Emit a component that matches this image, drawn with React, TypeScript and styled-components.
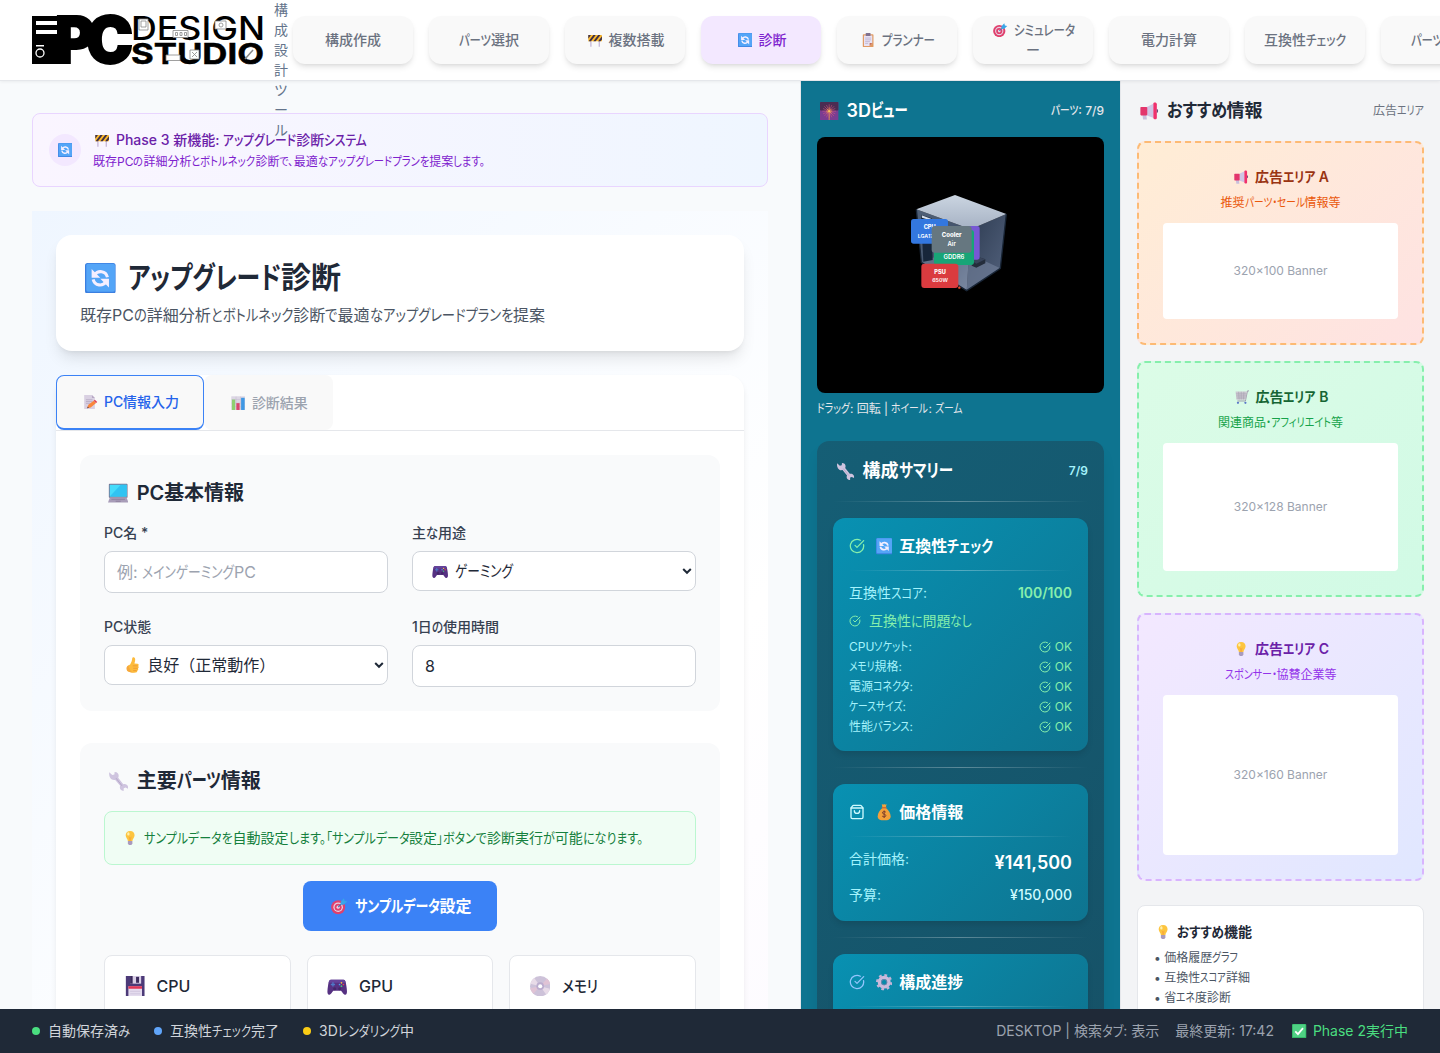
import React, { useLayoutEffect, useRef } from "react";
import styled, { createGlobalStyle, css } from "styled-components";
import { CircleCheckBig, ShoppingBag } from "lucide-react";

const Global = createGlobalStyle`
  *, *::before, *::after { box-sizing: border-box; }
  html, body { margin: 0; overflow: hidden; }
  body {
    font-family: Inter, "Noto Sans CJK JP", sans-serif;
    font-size: 16px;
    line-height: 24px;
    color: #1f2937;
    background: #f8fafc;
  }
  h1, h2, h3, h4, p, ul { margin: 0; padding: 0; font-weight: inherit; }
  button, input { font-family: inherit; }
`;

/* ---------- text with compact kana ---------- */

const Run = styled.span`
  display: inline-block;
  white-space: pre;
`;
const Kana = styled.span`
  display: inline-block;
  white-space: pre;
  transform-origin: 0 50%;
  font-feature-settings: "palt";
`;

const KANA = /([\u3040-\u30ff、。「」・]+)/;

/** Narrows the kana, and only the kana, so that the line takes the width w. */
function Ja({ text, w }: { text: string; w?: number }) {
  const ref = useRef<HTMLSpanElement>(null);
  useLayoutEffect(() => {
    const el = ref.current;
    if (!el || !w) return;
    const runs = Array.from(el.querySelectorAll<HTMLElement>("[data-kana]"));
    runs.forEach((r) => {
      r.style.width = "auto";
      r.style.transform = "none";
    });
    el.style.letterSpacing = "0px";
    const total = el.getBoundingClientRect().width;
    if (!runs.length) {
      el.style.letterSpacing = `${(w - total) / text.length}px`;
      return;
    }
    const widths = runs.map((r) => r.getBoundingClientRect().width);
    const kana = widths.reduce((a, b) => a + b, 0);
    const scale = (w - (total - kana)) / kana;
    runs.forEach((r, i) => {
      r.style.width = `${widths[i] * scale}px`;
      r.style.transform = `scaleX(${scale})`;
    });
  }, [text, w]);
  return (
    <Run ref={ref}>
      {text.split(KANA).map((part, i) =>
        i % 2 ? (
          <Kana key={i} data-kana>
            {part}
          </Kana>
        ) : (
          part
        )
      )}
    </Run>
  );
}

/* ---------- pictograms ---------- */

const Glyph = styled.span<{ $gap?: string }>`
  display: inline-flex;
  justify-content: center;
  flex: none;
  width: 1.37em;
  margin-right: ${(p) => p.$gap ?? "0.27em"};
  vertical-align: -0.17em;
  svg {
    width: 1.02em;
    height: 1.02em;
    display: block;
  }
`;

const pictures: Record<string, React.ReactNode> = {
  refresh: (
    <>
      <rect width="24" height="24" rx="2" fill="#3b7fe0" />
      <rect x="1" y="0.500" width="22.500" height="22" rx="1.500" fill="#54a5f7" />
      <g transform="translate(2.400 2.400) scale(0.8)">
        <g fill="none" stroke="#f5efff" strokeWidth="3">
          <path d="M6.500 8.500c3-4.500 11-4.200 12.500 2.500" />
          <path d="M17.500 15.500c-3 4.500-11 4.200-12.500-2.500" />
        </g>
        <path d="M3.500 3v8.500H12zM20.500 21v-8.500H12z" fill="#f5efff" />
      </g>
    </>
  ),
  barrier: (
    <>
      <path d="M4 12h1.800v11H4zM18 12h1.800v11H18z" fill="#b9a9cf" />
      <rect x="0.500" y="3.500" width="23" height="10.500" rx="1" fill="#fdb92c" />
      <path d="M1 14l8-10.500h4L5 14zM9 14l8-10.500h4L13 14zM17 14l6.500-8.500V11L21 14zM.5 3.500H5L.5 9.500z" fill="#3d3048" />
    </>
  ),
  clipboard: (
    <>
      <rect x="3" y="2" width="18" height="22" rx="1.500" fill="#e09a63" />
      <path d="M5 4h14v13l-4.500 5H5z" fill="#e8e2f4" />
      <path d="M14.500 22v-5H19z" fill="#c4705c" />
      <rect x="8" y="0" width="8" height="5" rx="1" fill="#80718f" />
      <path d="M7 8.500h10M7 11.500h10M7 14.500h8M7 17.500h5" stroke="#b3a6c4" strokeWidth="1.100" />
    </>
  ),
  target: (
    <>
      <circle cx="10.500" cy="13.500" r="10.300" fill="#e0406d" />
      <circle cx="10.500" cy="13.500" r="7" fill="#e6d3e4" />
      <circle cx="10.500" cy="13.500" r="5.200" fill="#e0406d" />
      <circle cx="10.500" cy="13.500" r="2.300" fill="#f0d6e4" />
      <path d="M10.500 13.500L19 5" stroke="#3a78b8" strokeWidth="1.600" />
      <path d="M14 6l5-5.500 1 3.500 4 1-5.500 5-4-.5z" fill="#38a6e8" />
    </>
  ),
  fireworks: (
    <>
      <rect width="24" height="24" rx="1" fill="#7a3d92" />
      <rect width="24" height="11" rx="1" fill="#4b2c52" />
      <path
        d="M12 3v18M3 12h18M5.600 5.600l12.800 12.800M18.400 5.600L5.600 18.400M8.500 4l7 16M15.500 4l-7 16M4 8.500l16 7M20 8.500l-16 7"
        stroke="#d8577f"
        strokeWidth="0.700"
      />
      <path d="M12 7v17M8 12h8M9 9l6 6M15 9l-6 6" stroke="#f0a648" strokeWidth="0.900" />
      <circle cx="12" cy="12" r="1.300" fill="#f8c65c" />
    </>
  ),
  horn: (
    <>
      <path d="M3 15h5l1 8H4z" fill="#c9bfdc" />
      <path d="M9 6.500L18 2v19l-9-3.500z" fill="#cfc4e4" />
      <rect x="0.500" y="6.500" width="9" height="11" rx="1" fill="#e3356c" />
      <path d="M17.500 2C17.500.5 22 0 22 3v18c0 2.500-4.500 2-4.500 0z" fill="#f0306c" />
      <path d="M22 9c2.200 0 2.200 5 0 5z" fill="#6c4a78" />
    </>
  ),
  cart: (
    <>
      <path d="M24 1.500h-3l-3.500 17H4" fill="none" stroke="#9a92a6" strokeWidth="1.500" />
      <path d="M1 2.500h19l-2 14H2.500z" fill="#cbc7d0" />
      <path d="M1.500 6.500H20M2 10h17M2.500 13.500h16M6 3l1 13M10.500 3v13M15 3l-.8 13" stroke="#a29cab" strokeWidth="0.900" />
      <circle cx="5" cy="21.500" r="1.900" fill="#5b78c9" />
      <circle cx="17.500" cy="21.500" r="1.900" fill="#5b78c9" />
    </>
  ),
  bulb: (
    <>
      <path d="M12 0c5 0 7.500 3.500 7.500 7.300 0 4-3.500 5.700-3.700 9.700H8.200C8 13 4.500 11.300 4.500 7.300 4.500 3.500 7 0 12 0z" fill="#fdc53f" />
      <path d="M9.500 9l2.500 2 2.500-2L13 17h-2z" fill="#f8ac3c" />
      <ellipse cx="9" cy="5" rx="2" ry="2.700" fill="#fff0ac" />
      <path d="M8.200 17h7.600v4l-2 3h-3.600l-2-3z" fill="#a99bbd" />
    </>
  ),
  memo: (
    <>
      <path d="M2 0h13l5 5v19H2z" fill="#d9d0e2" />
      <path d="M15 0v5h5z" fill="#b7a8c4" />
      <path d="M5 8h11M5 11h11M5 14h7" stroke="#b0a2bd" strokeWidth="1.200" />
      <path d="M7 22.500l2-6 9-7 4 4-9 7.500z" fill="#f9873c" />
      <path d="M18 9.500l2-1.600 4 4-2 1.600z" fill="#e23f51" />
      <path d="M7 22.500l.9-3 2.200 2z" fill="#57404b" />
    </>
  ),
  chart: (
    <>
      <rect x="0.500" y="0.500" width="23" height="23" fill="#dcd6e4" />
      <path d="M1 6h22M1 12h22M1 18h22M8.500 1v22M16 1v22" stroke="#c4bccf" strokeWidth="0.900" />
      <rect x="1.500" y="6" width="5.500" height="17.500" fill="#8ed070" />
      <rect x="9" y="12" width="5.500" height="11.500" fill="#d9466c" />
      <rect x="17" y="3" width="6" height="20.500" fill="#3f98e4" />
    </>
  ),
  laptop: (
    <>
      <rect x="1" y="1" width="22" height="16.500" rx="1" fill="#7b6f8e" />
      <rect x="2" y="2" width="20" height="14" fill="#45dcfb" />
      <path d="M2 16L15 2h7v14z" fill="#30c3f2" />
      <path d="M2 17.500h20l2 5.500H0z" fill="#a89cb8" />
      <path d="M4 19.200h16M9 21.500h6" stroke="#8a7d99" />
    </>
  ),
  gamepad: (
    <>
      <path d="M5 4.500h14c2.500 0 3 2 3.800 7 .8 5.500 1.500 10-1.300 10.500-2.500.4-3.500-3.500-5-4.500h-9c-1.500 1-2.500 4.900-5 4.500C-.3 21.500.4 17 1.200 11.500c.8-5 1.300-7 3.800-7z" fill="#563182" />
      <path d="M5 4.500h14c2 0 2.700 1.500 3.100 3.500H1.900C2.300 6 3 4.500 5 4.500z" fill="#64429a" />
      <path d="M7 7.500v5M4.500 10h5" stroke="#4f78c6" strokeWidth="1.600" />
      <circle cx="17" cy="8" r="1" fill="#f5c23e" />
      <circle cx="19.300" cy="10" r="1" fill="#ec4157" />
      <circle cx="14.800" cy="10" r="1" fill="#48a1ed" />
      <circle cx="17" cy="12" r="1" fill="#45cf78" />
      <circle cx="9" cy="15" r="1.800" fill="#432769" />
      <circle cx="15" cy="15" r="1.800" fill="#432769" />
    </>
  ),
  thumb: (
    <>
      <path d="M9 11C11 8 12 4.500 12.200 1.500c.2-2 4-1.600 4.200 1.500.2 2.500-.6 5-1 6.500l4.600.5c2 .3 2 2.800.8 3.400 1.200.8 1 3-.3 3.500.9 1 .4 2.900-1 3.200.3 1.500-.8 2.600-2.500 2.800-4 .6-8 .3-10.500-1.400-3-2-3.500-8.500 2.500-10.500z" fill="#fdbb3c" />
      <path d="M13 13h7M13.500 16.600h6.500M13.500 20h5" stroke="#e58a2e" strokeWidth="0.900" />
      <path d="M6.500 12c-4 2-3.500 8 0 9.500 2 1.200 5 1.800 8 1.700-4-1-6.500-5-8-11.200z" fill="#f6a83c" />
    </>
  ),
  wrench: (
    <>
      <path d="M1.500 1.500l3.500 3.300 2.500-.6.300-3C12 1 13.500 5 12 8l6 7.500c3-1 6.500 1 5.500 5.500l-2.800-1.500-2.200.8-.1 3.200c-4-.2-5.200-3.500-4-6L8.500 10.500C4 11.800.5 7 1.500 1.500z" fill="#cfc4df" />
      <path d="M9.500 8.500l7 9" stroke="#b3a5c6" strokeWidth="1.100" />
    </>
  ),
  floppy: (
    <>
      <path d="M1 0h22v24H1z" fill="#4c3a78" />
      <rect x="6" y="0" width="13" height="9" fill="#d9cfe6" />
      <rect x="13" y="1" width="3.500" height="7" fill="#3c2c5d" />
      <rect x="6" y="0" width="3" height="9" fill="#3c2c5d" />
      <rect x="4" y="12" width="16" height="12" fill="#e4dbee" />
      <rect x="4" y="12" width="16" height="3" fill="#e13656" />
      <path d="M6 18h12M6 21h12" stroke="#cdc2da" />
    </>
  ),
  disc: (
    <>
      <circle cx="12" cy="12" r="12" fill="#cdc2d9" />
      <path d="M12 12L5 2.300A12 12 0 0 0 .5 9zM12 12l7 9.700a12 12 0 0 0 4.500-6.700z" fill="#e8dbe8" />
      <path d="M12 12L.2 14.500A12 12 0 0 0 4 21zM12 12l11.800-2.500A12 12 0 0 0 20 3z" fill="#e0c3d5" />
      <circle cx="12" cy="12" r="4.500" fill="#bbacce" />
      <circle cx="12" cy="12" r="2.400" fill="#fff" />
    </>
  ),
  money: (
    <>
      <path d="M8.500 0l2 1.200L12 0l1.500 1.200 2-1.200L14.500 5h-5z" fill="#f4a33b" />
      <path d="M9.500 6h5c4 3 7 8 7 12 0 5-3.500 6-9.500 6s-9.500-1-9.500-6c0-4 3-9 7-12z" fill="#f3a03a" />
      <path d="M8.500 4.500h7v2h-7z" fill="#d06a35" />
      <path d="M14.500 12c-1.500-1.500-5.500-1-5 1.200.5 2.200 5 1.300 5 3.900 0 2.400-4.500 2.400-5.500.5M12 9.500v11" fill="none" stroke="#7a3b2b" strokeWidth="1.400" />
    </>
  ),
  gear: (
    <>
      <circle cx="12" cy="12" r="7" fill="none" stroke="#cbbbdc" strokeWidth="5" />
      <circle cx="12" cy="12" r="10.200" fill="none" stroke="#c4b4d7" strokeWidth="3.600" strokeDasharray="4 4.010" />
      <circle cx="12" cy="12" r="4" fill="none" stroke="#9581ad" strokeWidth="1" />
    </>
  ),
  done: (
    <>
      <rect width="24" height="24" rx="1.500" fill="#35b768" />
      <rect x="1.500" y="1" width="21" height="21" rx="1" fill="#4fd184" />
      <path d="M5.500 12.500l4.500 4.500L18.500 7" fill="none" stroke="#fff" strokeWidth="3" />
    </>
  ),
};

function Pic({ name, gap }: { name: string; gap?: string }) {
  return (
    <Glyph $gap={gap}>
      <svg viewBox="0 0 24 24" aria-hidden="true">
        {pictures[name]}
      </svg>
    </Glyph>
  );
}

/* ---------- shell ---------- */

const Shell = styled.div`
  display: flex;
  flex-direction: column;
  width: 1440px;
  height: 1053px;
  overflow: hidden;
`;

const Header = styled.header`
  position: relative;
  z-index: 2;
  display: flex;
  align-items: center;
  flex: none;
  height: 81px;
  padding-left: 32px;
  background: #fff;
  border-bottom: 1px solid #e5e7eb;
  box-shadow: 0 1px 3px rgba(0, 0, 0, 0.06);
`;

const Tagline = styled.div`
  align-self: flex-start;
  flex: none;
  width: 14px;
  height: 80px;
  margin: 0 5px 0 11px;
  font-size: 14px;
  line-height: 20px;
  color: #64748b;
  word-break: break-all;
  line-break: anywhere;
`;

const Nav = styled.nav`
  display: flex;
  gap: 16px;
`;

const NavButton = styled.button<{ $active?: boolean }>`
  flex: none;
  width: 120px;
  height: 48px;
  padding: 0 16px;
  border: 0;
  border-radius: 12px;
  background: ${(p) => (p.$active ? "#f3e8ff" : "#f9f9f9")};
  color: ${(p) => (p.$active ? "#7e22ce" : "#6b7280")};
  font-size: 14px;
  font-weight: 500;
  line-height: 20px;
  white-space: nowrap;
  box-shadow: 0 4px 6px -1px rgba(0, 0, 0, 0.1), 0 2px 4px -2px rgba(0, 0, 0, 0.1);
`;

const Body = styled.div`
  display: grid;
  grid-template-columns: 800px 320px 320px;
  height: 928px;
  flex: none;
  overflow: hidden;
`;

const Main = styled.main`
  padding: 32px;
  height: 928px;
  overflow: hidden;
`;

const Notice = styled.section`
  display: flex;
  align-items: center;
  gap: 12px;
  height: 74px;
  padding: 16px;
  border: 1px solid #e9d5ff;
  border-radius: 8px;
  background: linear-gradient(90deg, #faf5ff, #eff6ff);
  margin-bottom: 24px;
`;
const NoticeBadge = styled.span`
  display: flex;
  align-items: center;
  justify-content: center;
  width: 32px;
  height: 32px;
  border-radius: 50%;
  background: #f3e8ff;
  font-size: 14px;
`;
const NoticeTitle = styled.h3`
  font-size: 14px;
  line-height: 20px;
  font-weight: 500;
  color: #6b21a8;
`;
const NoticeText = styled.p`
  margin-top: 3px;
  font-size: 12px;
  line-height: 17px;
  color: #7e22ce;
`;

const Stage = styled.div`
  height: 1500px;
  padding: 24px;
  background: linear-gradient(135deg, #eff6ff, #ffffff 50%, #faf5ff);
`;

const Hero = styled.section`
  height: 116px;
  padding: 24px;
  border-radius: 16px;
  background: #fff;
  box-shadow: 0 10px 15px -3px rgba(0, 0, 0, 0.1), 0 4px 6px -4px rgba(0, 0, 0, 0.1);
  margin-bottom: 24px;
`;
const HeroTitle = styled.h1`
  font-size: 30px;
  line-height: 36px;
  font-weight: 600;
`;
const HeroText = styled.p`
  margin-top: 8px;
  color: #4b5563;
`;

const Panel = styled.section`
  height: 1200px;
  border-radius: 16px;
  background: #fff;
  box-shadow: 0 4px 6px -1px rgba(0, 0, 0, 0.1);
`;
const Tabs = styled.div`
  display: flex;
  height: 56px;
  border-bottom: 1px solid #e5e7eb;
`;
const Tab = styled.button<{ $active?: boolean }>`
  height: 55px;
  padding: 0 24px;
  border: 1px solid transparent;
  border-radius: 8px;
  background: #f9f9f9;
  color: #9ca3af;
  font-size: 14px;
  font-weight: 500;
  line-height: 20px;
  ${(p) =>
    p.$active &&
    css`
      border-color: #3b82f6;
      border-bottom-width: 2px;
      color: #2563eb;
    `}
`;
const PanelBody = styled.div`
  display: flex;
  flex-direction: column;
  gap: 32px;
  padding: 24px;
`;
const Group = styled.section`
  padding: 24px;
  border-radius: 12px;
  background: #f9fafb;
`;
const GroupTitle = styled.h2`
  font-size: 20px;
  line-height: 28px;
  font-weight: 600;
  margin-bottom: 16px;
`;
const Fields = styled.div`
  display: grid;
  grid-template-columns: 1fr 1fr;
  gap: 24px;
`;
const Field = styled.div`
  height: 70px;
`;
const Label = styled.label`
  display: block;
  margin-bottom: 8px;
  font-size: 14px;
  line-height: 20px;
  font-weight: 500;
  color: #374151;
`;
const Control = styled.div<{ $select?: boolean; $muted?: boolean }>`
  display: flex;
  align-items: center;
  height: ${(p) => (p.$select ? 40 : 42)}px;
  padding: ${(p) => (p.$select ? "0 3px 0 16px" : "0 12px")};
  border: 1px solid #d1d5db;
  border-radius: 8px;
  background: #fff;
  color: ${(p) => (p.$muted ? "#9ca3af" : "#1f2937")};
`;
const Arrow = styled.svg`
  width: 10px;
  height: 8px;
  margin-left: auto;
`;

const Hint = styled.p`
  height: 54px;
  padding: 16px;
  border: 1px solid #bbf7d0;
  border-radius: 8px;
  background: #f0fdf4;
  color: #15803d;
  font-size: 14px;
  line-height: 20px;
  margin-bottom: 16px;
`;
const Primary = styled.button`
  display: block;
  width: 194px;
  height: 50px;
  margin: 0 auto 24px;
  padding: 0;
  border: 0;
  border-radius: 8px;
  background: #3b82f6;
  color: #fff;
  font-size: 16px;
  font-weight: 600;
  line-height: 24px;
`;
const Parts = styled.div`
  display: grid;
  grid-template-columns: repeat(3, 1fr);
  gap: 16px;
`;
const Part = styled.div`
  display: flex;
  align-items: flex-start;
  height: 200px;
  padding: 16px;
  border: 1px solid #e5e7eb;
  border-radius: 8px;
  background: #fff;
`;
const PartName = styled.h4`
  display: flex;
  align-items: center;
  height: 28px;
  font-weight: 500;
`;
const PartIcon = styled.span`
  display: flex;
  font-size: 20px;
`;

/* ---------- 3D column ---------- */

const Side = styled.aside`
  height: 928px;
  overflow: hidden;
  padding: 16px;
  border-left: 1px solid #e5e7eb;
  background: #0e7490;
`;
const SideHead = styled.div<{ $mb?: number }>`
  display: flex;
  align-items: center;
  justify-content: space-between;
  height: 28px;
  margin-bottom: ${(p) => p.$mb ?? 12}px;
`;
const SideTitle = styled.h2<{ $dark?: boolean }>`
  font-size: 18px;
  line-height: 28px;
  font-weight: 600;
  color: ${(p) => (p.$dark ? "#1f2937" : "#fff")};
`;
const SideMeta = styled.span<{ $color: string; $weight?: number }>`
  font-size: 12px;
  line-height: 16px;
  font-weight: ${(p) => p.$weight ?? 400};
  color: ${(p) => p.$color};
`;
const Canvas = styled.div`
  height: 256px;
  border-radius: 8px;
  background: #000;
  overflow: hidden;
  svg {
    display: block;
  }
`;
const CanvasHelp = styled.p`
  margin: 8px 0 24px;
  font-size: 12px;
  line-height: 16px;
  color: #e5e7eb;
`;
const Summary = styled.section`
  height: 900px;
  padding: 16px;
  border-radius: 12px;
  background: linear-gradient(135deg, #155e75, #164e63);
  box-shadow: 0 10px 15px -3px rgba(0, 0, 0, 0.1);
`;
const Rule = styled.div<{ $m: number }>`
  height: 1px;
  margin: ${(p) => p.$m}px 0;
  background: linear-gradient(90deg, transparent, rgba(255, 255, 255, 0.3), transparent);
`;
const Tile = styled.section`
  padding: 16px;
  border-radius: 12px;
  background: linear-gradient(135deg, #0891b2, #0e7490);
  box-shadow: 0 4px 6px -1px rgba(0, 0, 0, 0.12);
`;
const TileTitle = styled.h3`
  display: flex;
  align-items: center;
  gap: 8px;
  height: 24px;
  font-size: 16px;
  font-weight: 600;
  color: #fff;
`;
const Row = styled.div<{ $small?: boolean; $mt?: number }>`
  display: flex;
  justify-content: space-between;
  margin-top: ${(p) => p.$mt ?? 0}px;
  font-size: ${(p) => (p.$small ? 12 : 14)}px;
  line-height: ${(p) => (p.$small ? 16 : 20)}px;
  color: #a5f3fc;
`;
const Good = styled.span<{ $bold?: boolean; $gap?: number }>`
  display: inline-flex;
  align-items: center;
  gap: ${(p) => p.$gap ?? 4}px;
  color: #86efac;
  font-weight: ${(p) => (p.$bold ? 600 : 400)};
`;
const Price = styled.strong`
  font-size: 18px;
  line-height: 28px;
  font-weight: 600;
  color: #fff;
`;
const Budget = styled.span`
  font-weight: 500;
  color: #cffafe;
`;

/* ---------- ads ---------- */

const Ads = styled.aside`
  height: 928px;
  overflow: hidden;
  padding: 16px;
  border-left: 1px solid #e5e7eb;
  background: #f3f4f6;
`;
const Ad = styled.section<{ $line: string; $from: string; $to: string }>`
  padding: 24px;
  margin-bottom: 16px;
  border: 2px dashed ${(p) => p.$line};
  border-radius: 8px;
  background: linear-gradient(135deg, ${(p) => p.$from}, ${(p) => p.$to});
  text-align: center;
`;
const AdTitle = styled.h3<{ $color: string }>`
  font-size: 14px;
  line-height: 20px;
  font-weight: 600;
  color: ${(p) => p.$color};
`;
const AdText = styled.p<{ $color: string }>`
  margin: 8px 0 12px;
  font-size: 12px;
  line-height: 16px;
  color: ${(p) => p.$color};
`;
const Banner = styled.div<{ $h: number }>`
  display: flex;
  align-items: center;
  justify-content: center;
  height: ${(p) => p.$h}px;
  border-radius: 4px;
  background: #fff;
  color: #9ca3af;
  font-size: 12px;
`;
const Tips = styled.section`
  margin-top: 24px;
  height: 160px;
  padding: 16px;
  border: 1px solid #e5e7eb;
  border-radius: 8px;
  background: #fff;
`;
const TipsTitle = styled.h3`
  margin-bottom: 8px;
  font-size: 14px;
  line-height: 20px;
  font-weight: 600;
`;
const TipsList = styled.ul`
  display: flex;
  flex-direction: column;
  gap: 4px;
  list-style: none;
  font-size: 12px;
  line-height: 16px;
  color: #4b5563;
  li {
    height: 16px;
  }
`;

/* ---------- footer ---------- */

const Footer = styled.footer`
  display: flex;
  justify-content: space-between;
  align-items: center;
  flex: none;
  height: 44px;
  padding: 0 32px;
  background: #1f2937;
  color: #d1d5db;
  font-size: 14px;
  line-height: 20px;
`;
const Statuses = styled.div<{ $gap: number; $muted?: boolean }>`
  display: flex;
  align-items: center;
  gap: ${(p) => p.$gap}px;
  ${(p) => p.$muted && "color: #9ca3af;"}
`;
const Status = styled.span`
  display: flex;
  align-items: center;
  gap: 8px;
`;
const Dot = styled.i<{ $color: string }>`
  width: 8px;
  height: 8px;
  border-radius: 50%;
  background: ${(p) => p.$color};
`;
const Phase = styled.span`
  color: #4ade80;
`;

/* ---------- drawings ---------- */

const LogoSvg = styled.svg`
  display: block;
  flex: none;
  width: 231px;
  height: 48px;
  overflow: visible;
`;

function Logo() {
  return (
    <LogoSvg viewBox="0 0 231 48" fontFamily="Inter, sans-serif">
      <path d="M0 0h36v48H0z" />
      <g fontSize="64" fontWeight="900" stroke="#000" strokeWidth="2">
        <text x="23" y="47" textLength="40" lengthAdjust="spacingAndGlyphs">
          P
        </text>
        <text x="54" y="47" textLength="47" lengthAdjust="spacingAndGlyphs">
          C
        </text>
      </g>
      <path d="M4 5h21v4H4zM4 14h21v4H4zM4 29h8v1.500H4z" fill="#fff" />
      <circle cx="8" cy="37" r="4" fill="none" stroke="#fff" strokeWidth="1.300" />
      <text x="99" y="23.500" fontSize="32" fontWeight="500" textLength="134" lengthAdjust="spacingAndGlyphs">
        DESIGN
      </text>
      <text x="99" y="47.500" fontSize="29" fontWeight="700" textLength="133" lengthAdjust="spacingAndGlyphs" stroke="#000" strokeWidth="0.500">
        STUDIO
      </text>
      <g fill="#fff" stroke="#888" strokeWidth="0.800">
        <path d="M107 3h9v11h-9zM109 5h5v6h-5z" />
        <path d="M141 14.500h15v7h-15zM143.500 16.500h2v3h-2zM148 16.500h2v3h-2zM152.500 16.500h2v3h-2z" />
        <path d="M183 5h11v8h-11z" />
        <circle cx="189" cy="9" r="2" />
        <path d="M134 39h14v5.500h-14z" />
        <path d="M158 34h9v9h-9zM160 36l5 5M165 36l-5 5" />
        <path d="M213 43l8-9" strokeWidth="1.500" />
      </g>
    </LogoSvg>
  );
}

function CaseView() {
  return (
    <svg width="287" height="256" viewBox="0 0 287 256">
      <defs>
        <linearGradient id="top" x1="0" y1="0" x2="0" y2="1">
          <stop offset="0" stopColor="#cbd5e1" />
          <stop offset="1" stopColor="#a5b1c3" />
        </linearGradient>
        <linearGradient id="left" x1="0" y1="0" x2="1" y2="1">
          <stop offset="0" stopColor="#4f6078" />
          <stop offset="0.550" stopColor="#43536b" />
          <stop offset="1" stopColor="#8c9ab1" />
        </linearGradient>
        <linearGradient id="right" x1="0" y1="0" x2="1" y2="1">
          <stop offset="0" stopColor="#2c3a50" />
          <stop offset="1" stopColor="#55647f" />
        </linearGradient>
      </defs>
      <g transform="translate(63 33) scale(0.33333)" fontFamily="Inter, sans-serif" textAnchor="middle" fill="#fff">
        <path d="M109 118L272 178 260 362 124 277z" fill="url(#left)" />
        <path d="M272 178L379 132 361 295 260 362z" fill="url(#right)" />
        <path d="M124 277L232 235 361 295 260 362z" fill="#71809a" opacity="0.650" />
        <path d="M109 118L225 75 379 132 272 178z" fill="url(#top)" />
        <path d="M109 118L124 277 260 362 361 295 379 132" fill="none" stroke="#182536" strokeWidth="4" />
        <path d="M123 134L155 145 158 270 130 275z" fill="#17263a" />
        <path d="M125 136l28 10-2 5-25-8z" fill="#d5deeb" />
        <path d="M275 272l20-11 21 7v12l-27 13-14-6z" fill="#242d3b" />
        <path d="M275 272l20-11 21 7-27 13z" fill="#38445a" />
        <rect x="193" y="168" width="106" height="101" rx="8" fill="#7758d4" />
        <rect x="93" y="147" width="111" height="74" rx="8" fill="#3377df" />
        <text x="149" y="177" fontSize="17" fontWeight="800">CPU</text>
        <text x="147" y="204" fontSize="16" fontWeight="600">LGA1700</text>
        <rect x="162" y="180" width="120" height="105" rx="9" fill="#18a577" />
        <text x="222" y="267" fontSize="18" fontWeight="600">GDDR6</text>
        <rect x="155" y="168" width="120" height="80" rx="9" fill="#667780" />
        <text x="215" y="201" fontSize="18" fontWeight="800">Cooler</text>
        <text x="215" y="227" fontSize="18" fontWeight="600">Air</text>
        <rect x="124" y="281" width="111" height="73" rx="9" fill="#da3b3f" />
        <text x="180" y="312" fontSize="17" fontWeight="800">PSU</text>
        <text x="180" y="336" fontSize="16" fontWeight="600">650W</text>
        <circle cx="238" cy="353" r="3.500" fill="#e9502e" />
      </g>
    </svg>
  );
}

function SelectArrow() {
  return (
    <Arrow viewBox="0 0 10 8">
      <path d="M1.200 2l3.800 3.800L8.800 2" fill="none" stroke="#1f2937" strokeWidth="2" />
    </Arrow>
  );
}

/* ---------- data ---------- */

const nav = [
  { text: "構成作成", w: 56 },
  { text: "パーツ選択", w: 60 },
  { text: "複数搭載", w: 56, icon: "barrier" },
  { text: "診断", w: 28, icon: "refresh", active: true },
  { text: "プランナー", w: 53, icon: "clipboard" },
  { text: "シミュレータ", w: 61, icon: "target", rest: "ー" },
  { text: "電力計算", w: 56 },
  { text: "互換性チェック", w: 82 },
  { text: "パーツ検索", w: 60 },
];

const checks = [
  { text: "CPUソケット:", w: 63 },
  { text: "メモリ規格:", w: 53 },
  { text: "電源コネクタ:", w: 64 },
  { text: "ケースサイズ:", w: 57 },
  { text: "性能バランス:", w: 64 },
];

const ads = [
  { title: "広告エリア A", tw: 74, text: "推奨パーツ・セール情報等", w: 120, icon: "horn", h: 96, banner: "320×100 Banner", line: "#fdba74", from: "#ffedd5", to: "#fee2e2", c1: "#9a3412", c2: "#ea580c" },
  { title: "広告エリア B", tw: 73, text: "関連商品・アフィリエイト等", w: 125, icon: "cart", h: 128, banner: "320×128 Banner", line: "#86efac", from: "#dcfce7", to: "#d1fae5", c1: "#166534", c2: "#16a34a" },
  { title: "広告エリア C", tw: 74, text: "スポンサー・協賛企業等", w: 112, icon: "bulb", h: 160, banner: "320×160 Banner", line: "#d8b4fe", from: "#f3e8ff", to: "#e0e7ff", c1: "#6b21a8", c2: "#9333ea" },
];

export default function App() {
  return (
    <Shell>
      <Global />
      <Header>
        <Logo />
        <Tagline>構成設計ツール</Tagline>
        <Nav>
          {nav.map((n) => (
            <NavButton key={n.text} $active={n.active}>
              {n.icon && <Pic name={n.icon} />}
              <Ja text={n.text} w={n.w} />
              {n.rest && (
                <>
                  <br />
                  {n.rest}
                </>
              )}
            </NavButton>
          ))}
        </Nav>
      </Header>

      <Body>
        <Main>
          <Notice>
            <NoticeBadge>
              <Pic name="refresh" gap="0" />
            </NoticeBadge>
            <div>
              <NoticeTitle>
                <Pic name="barrier" />
                <Ja text="Phase 3 新機能: アップグレード診断システム" w={251} />
              </NoticeTitle>
              <NoticeText>
                <Ja text="既存PCの詳細分析とボトルネック診断で、最適なアップグレードプランを提案します。" w={392} />
              </NoticeText>
            </div>
          </Notice>

          <Stage>
            <Hero>
              <HeroTitle>
                <Pic name="refresh" gap="0.23em" />
                <Ja text="アップグレード診断" w={213} />
              </HeroTitle>
              <HeroText>
                <Ja text="既存PCの詳細分析とボトルネック診断で最適なアップグレードプランを提案" w={465} />
              </HeroText>
            </Hero>

            <Panel>
              <Tabs>
                <Tab $active>
                  <Pic name="memo" />
                  <Ja text="PC情報入力" w={75} />
                </Tab>
                <Tab>
                  <Pic name="chart" />
                  <Ja text="診断結果" w={56} />
                </Tab>
              </Tabs>
              <PanelBody>
                <Group>
                  <GroupTitle>
                    <Pic name="laptop" />
                    <Ja text="PC基本情報" w={107} />
                  </GroupTitle>
                  <Fields>
                    <Field>
                      <Label>PC名 *</Label>
                      <Control $muted>
                        <Ja text="例: メインゲーミングPC" w={139} />
                      </Control>
                    </Field>
                    <Field>
                      <Label>
                        <Ja text="主な用途" w={54} />
                      </Label>
                      <Control $select>
                        <Pic name="gamepad" />
                        <Ja text="ゲーミング" w={58} />
                        <SelectArrow />
                      </Control>
                    </Field>
                    <Field>
                      <Label>PC状態</Label>
                      <Control $select>
                        <Pic name="thumb" />
                        <Ja text="良好（正常動作）" w={128} />
                        <SelectArrow />
                      </Control>
                    </Field>
                    <Field>
                      <Label>
                        <Ja text="1日の使用時間" w={87} />
                      </Label>
                      <Control>8</Control>
                    </Field>
                  </Fields>
                </Group>

                <Group>
                  <GroupTitle>
                    <Pic name="wrench" />
                    <Ja text="主要パーツ情報" w={124} />
                  </GroupTitle>
                  <Hint>
                    <Pic name="bulb" />
                    <Ja text="サンプルデータを自動設定します。「サンプルデータ設定」ボタンで診断実行が可能になります。" w={499} />
                  </Hint>
                  <Primary>
                    <Pic name="target" />
                    <Ja text="サンプルデータ設定" w={117} />
                  </Primary>
                  <Parts>
                    {[
                      { icon: "floppy", text: "CPU" },
                      { icon: "gamepad", text: "GPU" },
                      { icon: "disc", text: "メモリ", w: 36 },
                    ].map((p) => (
                      <Part key={p.text}>
                        <PartName>
                          <PartIcon>
                            <Pic name={p.icon} gap="0.4em" />
                          </PartIcon>
                          <Ja text={p.text} w={p.w} />
                        </PartName>
                      </Part>
                    ))}
                  </Parts>
                </Group>
              </PanelBody>
            </Panel>
          </Stage>
        </Main>

        <Side>
          <SideHead>
            <SideTitle>
              <Pic name="fireworks" />
              <Ja text="3Dビュー" w={61} />
            </SideTitle>
            <SideMeta $color="#e5e7eb" $weight={500}>
              <Ja text="パーツ: 7/9" w={53} />
            </SideMeta>
          </SideHead>
          <Canvas>
            <CaseView />
          </Canvas>
          <CanvasHelp>
            <Ja text="ドラッグ: 回転 | ホイール: ズーム" w={146} />
          </CanvasHelp>

          <Summary>
            <SideHead $mb={0}>
              <SideTitle>
                <Pic name="wrench" />
                <Ja text="構成サマリー" w={90} />
              </SideTitle>
              <SideMeta $color="#a5f3fc" $weight={600}>
                7/9
              </SideMeta>
            </SideHead>
            <Rule $m={16} />
            <Tile>
              <TileTitle>
                <CircleCheckBig size={16} color="#86efac" strokeWidth={1.9} />
                <span>
                  <Pic name="refresh" />
                  <Ja text="互換性チェック" w={94} />
                </span>
              </TileTitle>
              <Rule $m={12} />
              <Row>
                <Ja text="互換性スコア:" w={78} />
                <Good $bold>100/100</Good>
              </Row>
              <Row $mt={8}>
                <Good $gap={8}>
                  <CircleCheckBig size={12} />
                  <Ja text="互換性に問題なし" w={103} />
                </Good>
              </Row>
              {checks.map((c, i) => (
                <Row key={c.text} $small $mt={i ? 4 : 8}>
                  <Ja text={c.text} w={c.w} />
                  <Good>
                    <CircleCheckBig size={12} />
                    OK
                  </Good>
                </Row>
              ))}
            </Tile>
            <Rule $m={16} />
            <Tile>
              <TileTitle>
                <ShoppingBag size={16} color="#cffafe" />
                <span>
                  <Pic name="money" />
                  価格情報
                </span>
              </TileTitle>
              <Rule $m={12} />
              <Row>
                <span>合計価格:</span>
                <Price>¥141,500</Price>
              </Row>
              <Row $mt={8}>
                <span>予算:</span>
                <Budget>¥150,000</Budget>
              </Row>
            </Tile>
            <Rule $m={16} />
            <Tile>
              <TileTitle>
                <CircleCheckBig size={16} color="#93c5fd" strokeWidth={1.9} />
                <span>
                  <Pic name="gear" />
                  構成進捗
                </span>
              </TileTitle>
              <Rule $m={12} />
            </Tile>
          </Summary>
        </Side>

        <Ads>
          <SideHead $mb={16}>
            <SideTitle $dark>
              <Pic name="horn" />
              <Ja text="おすすめ情報" w={96} />
            </SideTitle>
            <SideMeta $color="#6b7280">
              <Ja text="広告エリア" w={51} />
            </SideMeta>
          </SideHead>
          {ads.map((a) => (
            <Ad key={a.title} $line={a.line} $from={a.from} $to={a.to}>
              <AdTitle $color={a.c1}>
                <Pic name={a.icon} />
                <Ja text={a.title} w={a.tw} />
              </AdTitle>
              <AdText $color={a.c2}>
                <Ja text={a.text} w={a.w} />
              </AdText>
              <Banner $h={a.h}>{a.banner}</Banner>
            </Ad>
          ))}
          <Tips>
            <TipsTitle>
              <Pic name="bulb" />
              <Ja text="おすすめ機能" w={75} />
            </TipsTitle>
            <TipsList>
              <li>
                <Ja text="• 価格履歴グラフ" w={84} />
              </li>
              <li>
                <Ja text="• 互換性スコア詳細" w={96} />
              </li>
              <li>
                <Ja text="• 省エネ度診断" w={77} />
              </li>
            </TipsList>
          </Tips>
        </Ads>
      </Body>

      <Footer>
        <Statuses $gap={24}>
          <Status>
            <Dot $color="#4ade80" />
            <Ja text="自動保存済み" w={82} />
          </Status>
          <Status>
            <Dot $color="#60a5fa" />
            <Ja text="互換性チェック完了" w={109} />
          </Status>
          <Status>
            <Dot $color="#facc15" />
            <Ja text="3Dレンダリング中" w={95} />
          </Status>
        </Statuses>
        <Statuses $gap={16} $muted>
          <Ja text="DESKTOP | 検索タブ: 表示" w={163} />
          <span>最終更新: 17:42</span>
          <Phase>
            <Pic name="done" />
            Phase 2実行中
          </Phase>
        </Statuses>
      </Footer>
    </Shell>
  );
}
